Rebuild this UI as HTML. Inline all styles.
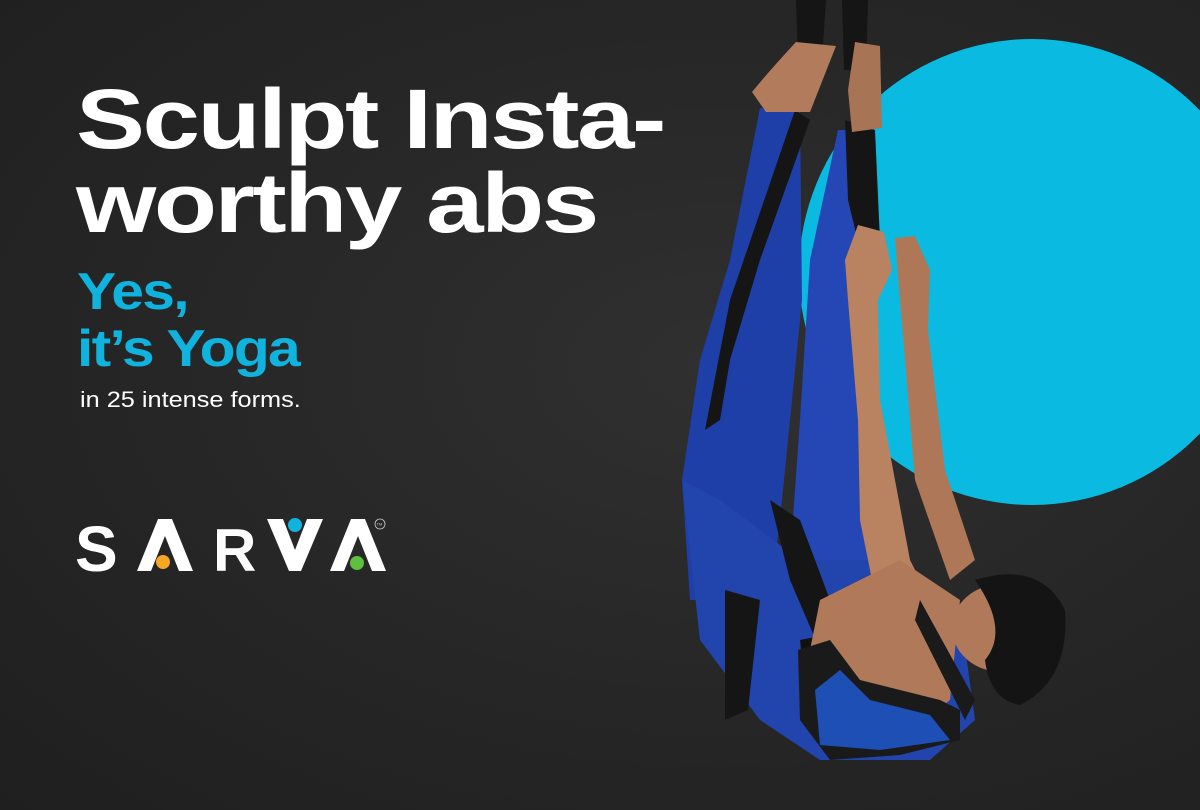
<!DOCTYPE html>
<html><head><meta charset="utf-8"><style>
html,body{margin:0;padding:0}
body{width:1200px;height:810px;overflow:hidden;position:relative;background:radial-gradient(ellipse at 60% 45%,#303030 0%,#262626 55%,#1f1f1f 100%);font-family:"Liberation Sans",sans-serif}
.t{position:absolute;left:76px;color:#fff;font-weight:bold;font-size:84px;letter-spacing:-2px;line-height:1;white-space:nowrap;transform:scaleX(1.23);transform-origin:0 0}
.b{position:absolute;left:77px;color:#0fb3de;font-weight:bold;font-size:52px;letter-spacing:-1.5px;line-height:1;white-space:nowrap;transform:scaleX(1.13);transform-origin:0 0}
.s{position:absolute;left:80px;top:389px;color:#fff;font-size:22px;line-height:1;white-space:nowrap;transform:scaleX(1.15);transform-origin:0 0}
svg{position:absolute;left:0;top:0}
</style></head><body>
<svg width="1200" height="810" viewBox="0 0 1200 810">
<circle cx="1032" cy="272" r="233" fill="#0bbae0"/>
<path d="M796 0h30l-4 60h-24z M842 0h26l-2 70h-22z" fill="#151515"/>
<path d="M760 108 L800 112 L802 300 L790 420 L780 520 L770 600 L690 600 L682 480 L700 360 L730 260 Z" fill="#1f3fa8"/>
<path d="M838 130 L872 130 L860 240 L850 320 L860 420 L880 560 L820 600 L790 560 L800 420 L810 260 Z" fill="#2447b5"/>
<path d="M682 480 L700 640 L760 720 L820 760 L930 760 L975 720 L960 610 L880 560 L800 560 L720 500 Z" fill="#2144ad"/>
<path d="M795 110 L810 120 L760 260 L730 360 L720 420 L705 430 L730 300 Z" fill="#151515"/>
<path d="M845 120 L875 130 L880 240 L860 250 L848 200 Z" fill="#151515"/>
<path d="M770 500 L800 520 L830 600 L845 640 L820 650 L790 580 Z" fill="#151515"/>
<path d="M725 590 L760 600 L748 710 L725 720 Z" fill="#151515"/>
<path d="M800 640 L850 630 L860 660 L805 690 Z" fill="#111"/>
<path d="M752 92 Q770 70 796 42 L836 46 L810 112 L766 112 Z" fill="#b27c5c"/>
<path d="M855 42 L880 46 L882 128 L852 132 L848 90 Z" fill="#a87456"/>
<path d="M858 225 L884 232 L892 270 L878 300 L880 400 L910 560 L930 600 L880 620 L860 520 L858 420 L848 300 L845 260 Z" fill="#b98261"/>
<path d="M895 238 L915 236 L930 270 L928 330 L945 470 L975 560 L950 580 L915 480 L905 360 L900 300 Z" fill="#ae7858"/>
<path d="M820 600 L900 560 L960 600 L950 700 L900 740 L840 740 L800 700 L810 650 Z" fill="#b07a5a"/>
<path d="M798 650 L830 640 L860 680 L900 690 L940 700 L960 710 L960 740 L900 755 L830 760 L800 720 Z" fill="#1a1a1a"/>
<path d="M815 690 L840 670 L870 700 L930 715 L950 740 L880 750 L820 745 Z" fill="#1e4fb5"/>
<path d="M920 600 L975 700 L965 720 L915 620 Z" fill="#1a1a1a"/>
<ellipse cx="1002" cy="628" rx="50" ry="44" fill="#b07a5a"/>
<path d="M975 580 Q1040 560 1065 610 Q1070 680 1020 705 Q990 700 985 660 Q1010 630 975 580 Z" fill="#141414"/>
</svg>
<div class="t" style="top:77px">Sculpt Insta-</div>
<div class="t" style="top:161px">worthy abs</div>
<div class="b" style="top:266px">Yes,</div>
<div class="b" style="top:323px">it’s Yoga</div>
<div class="s">in 25 intense forms.</div>
<svg width="400" height="600" viewBox="0 0 400 600" style="left:0;top:0">
<text x="75" y="571" fill="#fff" font-family="Liberation Sans" font-weight="bold" font-size="64">S</text>
<path d="M137 571 L158 519 L172 519 L193 571 L179 571 L165 536 L151 571 Z" fill="#fff"/>
<circle cx="163" cy="562" r="7" fill="#f5a623"/>
<text x="213" y="571" fill="#fff" font-family="Liberation Sans" font-weight="bold" font-size="60">R</text>
<path d="M267 519 L283 519 L295 550 L307 519 L323 519 L301 571 L289 571 Z" fill="#fff"/>
<circle cx="295" cy="525" r="7" fill="#0fb3de"/>
<path d="M330 571 L351 519 L365 519 L386 571 L372 571 L358 536 L344 571 Z" fill="#fff"/>
<circle cx="357" cy="563" r="7" fill="#5fbf3f"/>
<circle cx="380" cy="524" r="5" fill="none" stroke="#ccc" stroke-width="0.8"/>
<text x="376.5" y="525.5" fill="#ccc" font-family="Liberation Sans" font-size="4">TM</text>
</svg>
</body></html>
